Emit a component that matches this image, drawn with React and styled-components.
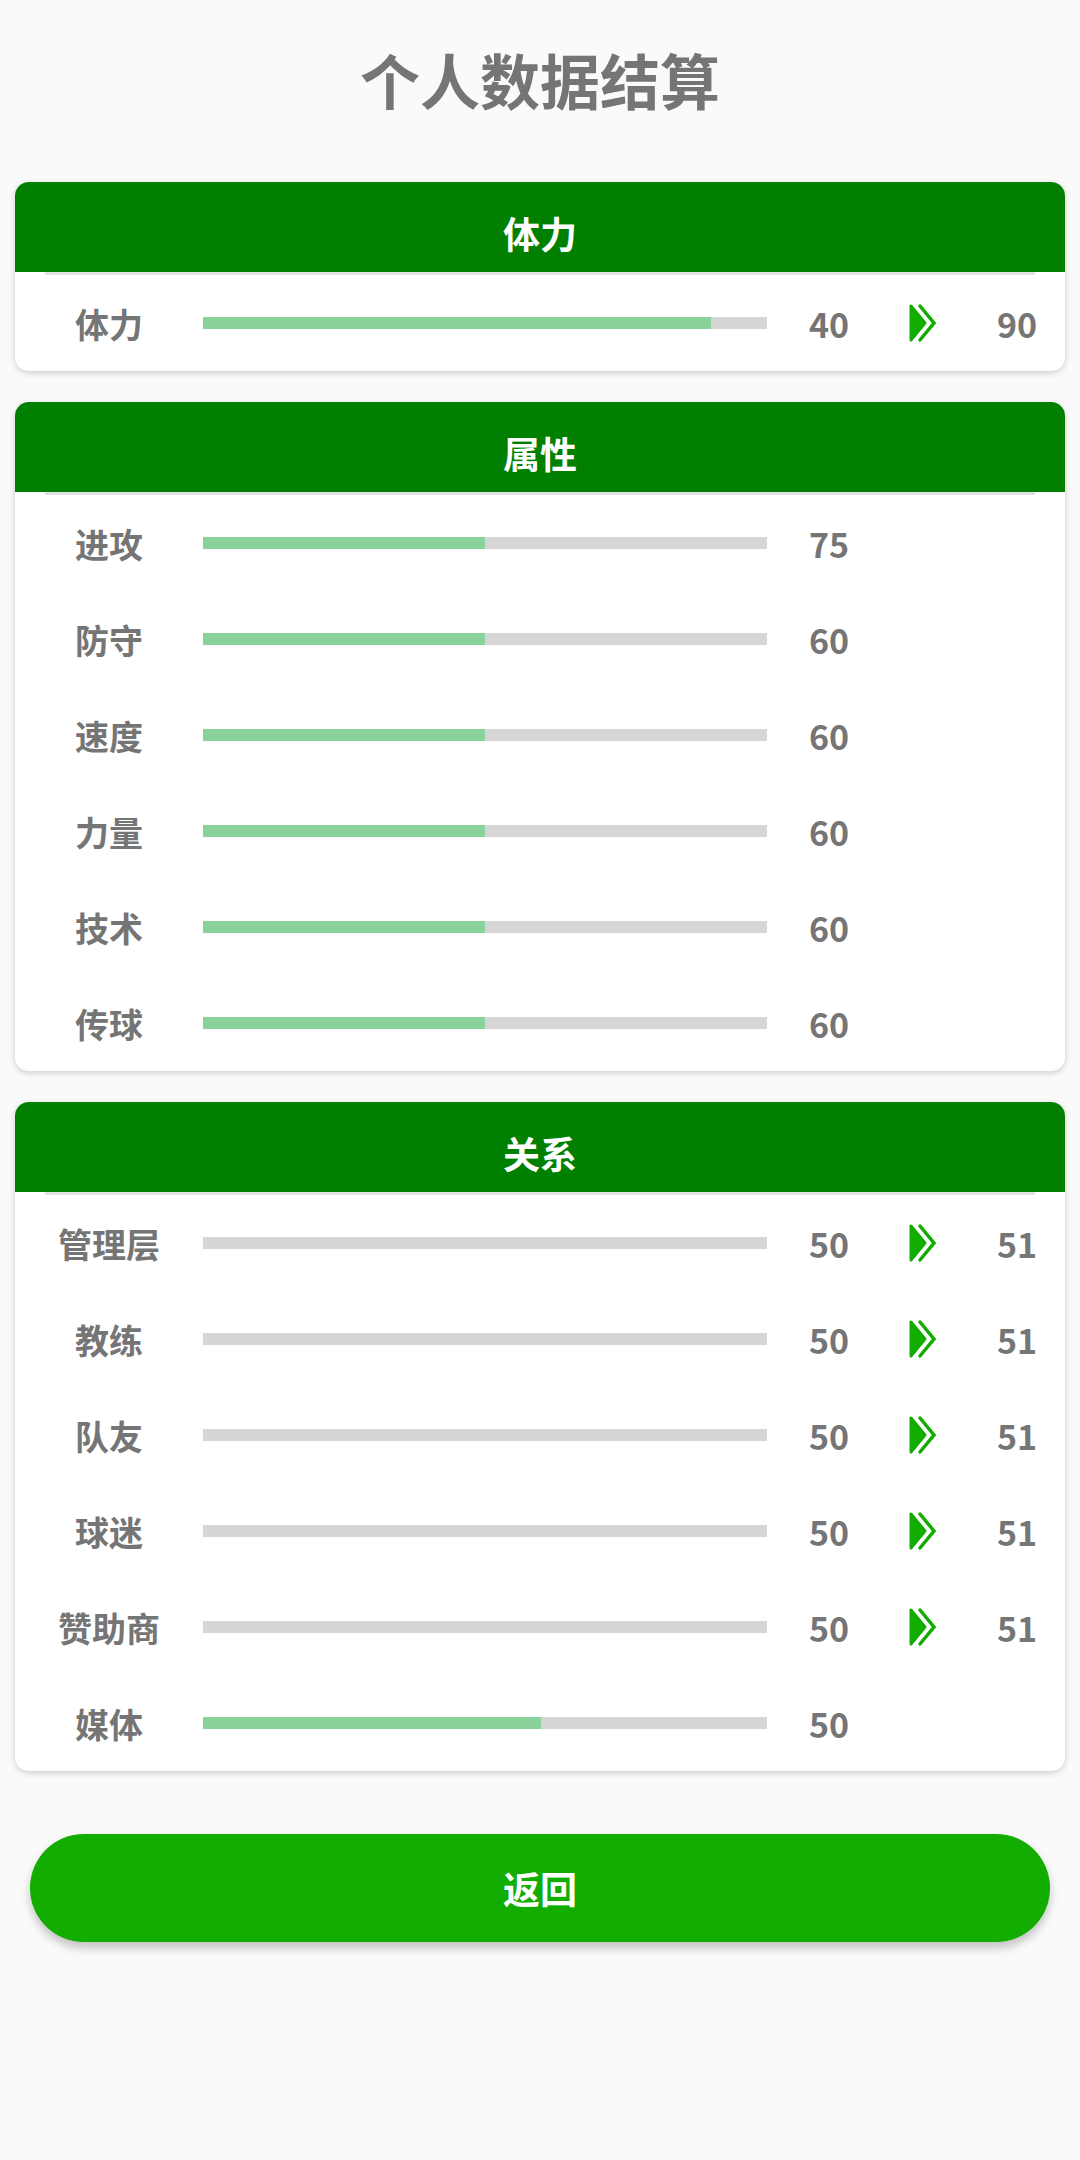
import React from 'react';
import styled, { createGlobalStyle } from 'styled-components';

const GlobalStyle = createGlobalStyle`
    html, body {
        margin: 0;
        padding: 0;
        background: #fafafa;
        font-family: "Noto Sans CJK SC", "Noto Sans", sans-serif;
    }
`;

const Page = styled.div`
    padding: 0 15px 200px;
    display: flex;
    flex-direction: column;
`;

const Title = styled.h1`
    margin: 48px 0 72px;
    font-size: 60px;
    line-height: 62px;
    font-weight: 700;
    text-align: center;
    color: #757575;
`;

const Card = styled.section`
    background: #fff;
    border-radius: 14px;
    overflow: hidden;
    box-shadow: 0 2px 6px rgba(0, 0, 0, 0.18);
    margin-bottom: 31px;
`;

const CardHeader = styled.header`
    height: 90px;
    box-sizing: border-box;
    padding-top: 12px;
    background: #007f00;
    color: #fff;
    font-size: 37px;
    font-weight: 700;
    display: flex;
    align-items: center;
    justify-content: center;
`;

const Divider = styled.div`
    height: 3px;
    margin: 0 30px;
    background: #e2e2e2;
`;

const Row = styled.div`
    height: 96px;
    padding-left: 15px;
    display: grid;
    grid-template-columns: 158px 594px 94px 94px 94px;
    align-items: center;
    color: #757575;
    font-size: 34px;
    font-weight: 700;
`;

const Label = styled.div`
    text-align: center;
    white-space: nowrap;
`;

const Track = styled.div`
    margin: 0 15px;
    height: 12px;
    background: #d6d6d6;
`;

const Fill = styled.div`
    height: 100%;
    background: #89d39b;
`;

const Value = styled.div`
    text-align: center;
`;

const ArrowCell = styled.div`
    display: flex;
    justify-content: center;
`;

const BackButton = styled.button`
    margin: 32px 15px 0;
    height: 108px;
    border: none;
    border-radius: 54px;
    background: #12ad00;
    color: #fff;
    font-family: inherit;
    font-size: 37px;
    font-weight: 700;
    box-shadow: 0 6px 10px rgba(0, 0, 0, 0.22);
`;

const Arrow = () => (
    <svg width="30" height="40" viewBox="0 0 30 40">
        <path d="M3 3 L3 37 L17 20 Z" fill="#12ad00" stroke="#12ad00" strokeWidth="3" strokeLinejoin="round" />
        <path d="M12 3 L26 20 L12 37" fill="none" stroke="#12ad00" strokeWidth="3.5" strokeLinecap="round" />
    </svg>
);

const StatRow = ({ label, pct, value, next }) => (
    <Row>
        <Label>{label}</Label>
        <Track>
            <Fill style={{ width: pct + '%' }} />
        </Track>
        <Value>{value}</Value>
        <ArrowCell>{next !== undefined ? <Arrow /> : null}</ArrowCell>
        <Value>{next}</Value>
    </Row>
);

const sections = [
    {
        title: '体力',
        rows: [{ label: '体力', pct: 90, value: 40, next: 90 }],
    },
    {
        title: '属性',
        rows: [
            { label: '进攻', pct: 50, value: 75 },
            { label: '防守', pct: 50, value: 60 },
            { label: '速度', pct: 50, value: 60 },
            { label: '力量', pct: 50, value: 60 },
            { label: '技术', pct: 50, value: 60 },
            { label: '传球', pct: 50, value: 60 },
        ],
    },
    {
        title: '关系',
        rows: [
            { label: '管理层', pct: 0, value: 50, next: 51 },
            { label: '教练', pct: 0, value: 50, next: 51 },
            { label: '队友', pct: 0, value: 50, next: 51 },
            { label: '球迷', pct: 0, value: 50, next: 51 },
            { label: '赞助商', pct: 0, value: 50, next: 51 },
            { label: '媒体', pct: 60, value: 50 },
        ],
    },
];

const App = () => (
    <Page>
        <GlobalStyle />
        <Title>个人数据结算</Title>
        {sections.map((s) => (
            <Card key={s.title}>
                <CardHeader>{s.title}</CardHeader>
                <Divider />
                {s.rows.map((r) => (
                    <StatRow key={r.label} {...r} />
                ))}
            </Card>
        ))}
        <BackButton>返回</BackButton>
    </Page>
);

export default App;
